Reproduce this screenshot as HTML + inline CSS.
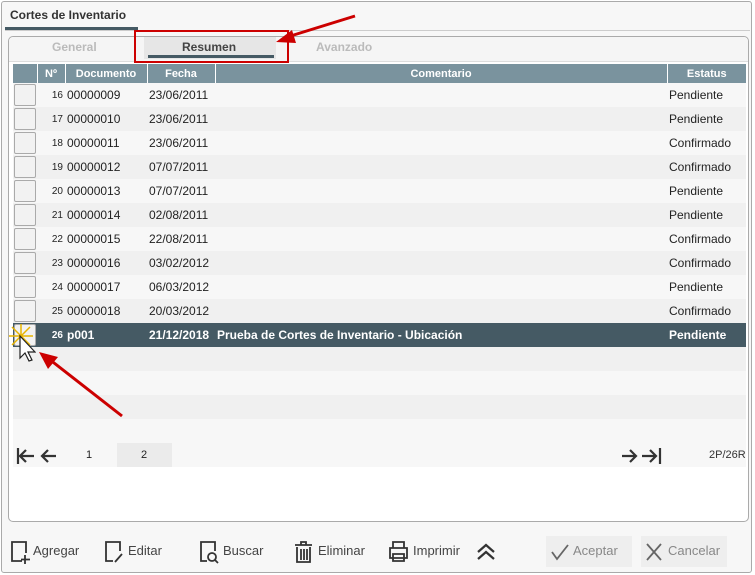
<!DOCTYPE html>
<html><head><meta charset="utf-8"><style>
*{box-sizing:border-box;margin:0;padding:0}
body{width:755px;height:575px;background:#fff;font-family:"Liberation Sans","DejaVu Sans",sans-serif;font-size:12px;color:#222;position:relative;overflow:hidden}
.outer{position:absolute;left:1px;top:1px;width:751px;height:572px;border:1px solid #aaa;border-radius:3px;background:#f7f7f7}
.ttl{position:absolute;left:10px;top:8px;font-size:12px;font-weight:bold;color:#333}
.ttlbar{position:absolute;left:5px;top:27px;width:133px;height:3px;background:#455a64}
.sep{position:absolute;left:5px;top:30px;width:745px;height:1px;background:#ccc}
.panel{position:absolute;left:8px;top:36px;width:741px;height:486px;border:1px solid #aaa;border-radius:5px;background:#fff}
.tabs{position:absolute;left:9px;top:37px;width:739px;height:25px;background:#f5f5f5;border-bottom:1px solid #ddd;border-radius:5px 5px 0 0}
.tab{position:absolute;top:40px;font-weight:bold;font-size:12px;color:#bbb}
.abs{position:absolute}
table{position:absolute;left:13px;top:64px;width:733px;border-collapse:collapse}
td,th{height:24px;padding:0 2px;white-space:nowrap}
th{height:19px;background:#7a939e;color:#fff;font-size:11px;font-weight:bold;border-right:1px solid #fff;text-align:center}
tr:nth-child(odd) td{background:#f0f0f0}
tr:nth-child(even) td{background:#f7f7f7}
tr.sel td{background:#455a64;color:#fff;font-weight:bold}
.cb{width:24px;padding:0}
.cb div{width:22px;height:22px;border:1px solid #aaa;border-radius:2px;background:#f2f2f2;margin-left:1px}
.n{font-size:10px;text-align:right;width:28px}
.tb{position:absolute;top:543px;font-size:13px;color:#444}
</style></head><body>
<div class="outer"></div>
<div class="ttl">Cortes de Inventario</div>
<div class="ttlbar"></div><div class="sep"></div>
<div class="panel"></div>
<div class="tabs"></div>
<div class="tab" style="left:52px">General</div>
<div class="abs" style="left:144px;top:37px;width:132px;height:22px;background:#e6e6e6"></div>
<div class="tab" style="left:182px;color:#444">Resumen</div>
<div class="abs" style="left:148px;top:55px;width:126px;height:3px;background:#455a64"></div>
<div class="tab" style="left:316px">Avanzado</div>
<div class="abs" style="left:134px;top:30px;width:155px;height:33px;border:2px solid #c00"></div>
<svg class="abs" style="left:270px;top:12px" width="95" height="35"><line x1="85" y1="4" x2="14" y2="26" stroke="#c00" stroke-width="3"/><polygon points="6,30 22,18 26,31" fill="#c00"/></svg>
<table>
<tr><th class="cb" style="width:24px"></th><th style="width:28px">Nº</th><th style="width:82px">Documento</th><th style="width:68px">Fecha</th><th>Comentario</th><th style="width:79px;border-right:0">Estatus</th></tr>
<tr><td class="cb"><div></div></td><td class="n">16</td><td>00000009</td><td>23/06/2011</td><td></td><td>Pendiente</td></tr>
<tr><td class="cb"><div></div></td><td class="n">17</td><td>00000010</td><td>23/06/2011</td><td></td><td>Pendiente</td></tr>
<tr><td class="cb"><div></div></td><td class="n">18</td><td>00000011</td><td>23/06/2011</td><td></td><td>Confirmado</td></tr>
<tr><td class="cb"><div></div></td><td class="n">19</td><td>00000012</td><td>07/07/2011</td><td></td><td>Confirmado</td></tr>
<tr><td class="cb"><div></div></td><td class="n">20</td><td>00000013</td><td>07/07/2011</td><td></td><td>Pendiente</td></tr>
<tr><td class="cb"><div></div></td><td class="n">21</td><td>00000014</td><td>02/08/2011</td><td></td><td>Pendiente</td></tr>
<tr><td class="cb"><div></div></td><td class="n">22</td><td>00000015</td><td>22/08/2011</td><td></td><td>Confirmado</td></tr>
<tr><td class="cb"><div></div></td><td class="n">23</td><td>00000016</td><td>03/02/2012</td><td></td><td>Confirmado</td></tr>
<tr><td class="cb"><div></div></td><td class="n">24</td><td>00000017</td><td>06/03/2012</td><td></td><td>Pendiente</td></tr>
<tr><td class="cb"><div></div></td><td class="n">25</td><td>00000018</td><td>20/03/2012</td><td></td><td>Confirmado</td></tr>
<tr class="sel"><td class="cb"><div></div></td><td class="n">26</td><td>p001</td><td>21/12/2018</td><td>Prueba de Cortes de Inventario - Ubicación</td><td>Pendiente</td></tr>
<tr><td colspan="6"></td></tr><tr><td colspan="6"></td></tr><tr><td colspan="6"></td></tr><tr><td colspan="6"></td></tr>
</table>
<div class="abs" style="left:13px;top:443px;width:733px;height:24px;background:#f7f7f7"></div>
<div class="abs" style="left:117px;top:443px;width:55px;height:24px;background:#ebebeb"></div>
<div class="abs" style="left:86px;top:449px;font-size:11px">1</div>
<div class="abs" style="left:141px;top:449px;font-size:11px">2</div>
<svg class="abs" style="left:15px;top:446px" width="45" height="20" stroke="#333" stroke-width="2.2" fill="none"><path d="M3 2v16M19 10H5M11 4l-6 6 6 6"/><path d="M41 10H27M33 4l-6 6 6 6"/></svg>
<svg class="abs" style="left:620px;top:446px" width="45" height="20" stroke="#333" stroke-width="2.2" fill="none"><path d="M2 10h14M10 4l6 6-6 6"/><path d="M22 10h14M30 4l6 6-6 6M40 2v16"/></svg>
<div class="abs" style="left:709px;top:449px;font-size:11px;color:#333">2P/26R</div>
<svg class="abs" style="left:6px;top:322px" width="30" height="45"><g stroke="#e8b400" stroke-width="1.5"><path d="M3 14h24M15 2v24M6 5l18 18M24 5L6 23"/></g><path d="M14 14v22l5-5 4 8 3-1-4-8h7z" fill="#fff" stroke="#222" stroke-width="1.2"/></svg>
<svg class="abs" style="left:35px;top:350px" width="95" height="70"><line x1="87" y1="66" x2="14" y2="9" stroke="#c00" stroke-width="3"/><polygon points="4,2 23,7 13,19" fill="#c00"/></svg>
<svg class="abs" style="left:10px;top:540px" width="20" height="25" stroke="#333" stroke-width="1.8" fill="none"><path d="M12 21H2V2h14v11M15 15v9M11 19.5h9"/></svg>
<div class="tb" style="left:33px">Agregar</div>
<svg class="abs" style="left:104px;top:540px" width="22" height="25" stroke="#333" stroke-width="1.8" fill="none"><path d="M9 21H2V2h14v9M11 22l7-8"/></svg>
<div class="tb" style="left:128px">Editar</div>
<svg class="abs" style="left:199px;top:540px" width="22" height="25" stroke="#333" stroke-width="1.8" fill="none"><path d="M8 21H2V2h14v9"/><circle cx="13" cy="17" r="4"/><path d="M16 20l3 3"/></svg>
<div class="tb" style="left:223px">Buscar</div>
<svg class="abs" style="left:294px;top:540px" width="20" height="24" stroke="#333" stroke-width="1.8" fill="none"><path d="M1 5h17M7 5V2h5v3M3 7v15h13V7M7 9v11M10 9v11M13 9v11"/></svg>
<div class="tb" style="left:318px">Eliminar</div>
<svg class="abs" style="left:388px;top:540px" width="22" height="24" stroke="#333" stroke-width="1.8" fill="none"><path d="M5 8V2h11v6M2 8h17v10H2zM5 14h11v7H5z"/></svg>
<div class="tb" style="left:413px">Imprimir</div>
<svg class="abs" style="left:475px;top:542px" width="22" height="20" stroke="#333" stroke-width="2.2" fill="none"><path d="M3 10l8-7 8 7M3 17l8-7 8 7"/></svg>
<div class="abs" style="left:546px;top:536px;width:86px;height:31px;background:#eee"></div>
<svg class="abs" style="left:550px;top:543px" width="20" height="18" stroke="#666" stroke-width="1.8" fill="none"><path d="M2 9l5 7L18 2"/></svg>
<div class="tb" style="left:573px;color:#888">Aceptar</div>
<div class="abs" style="left:641px;top:536px;width:86px;height:31px;background:#eee"></div>
<svg class="abs" style="left:645px;top:542px" width="18" height="20" stroke="#666" stroke-width="1.8" fill="none"><path d="M2 2l14 16M16 2L2 18"/></svg>
<div class="tb" style="left:668px;color:#888">Cancelar</div>
</body></html>
